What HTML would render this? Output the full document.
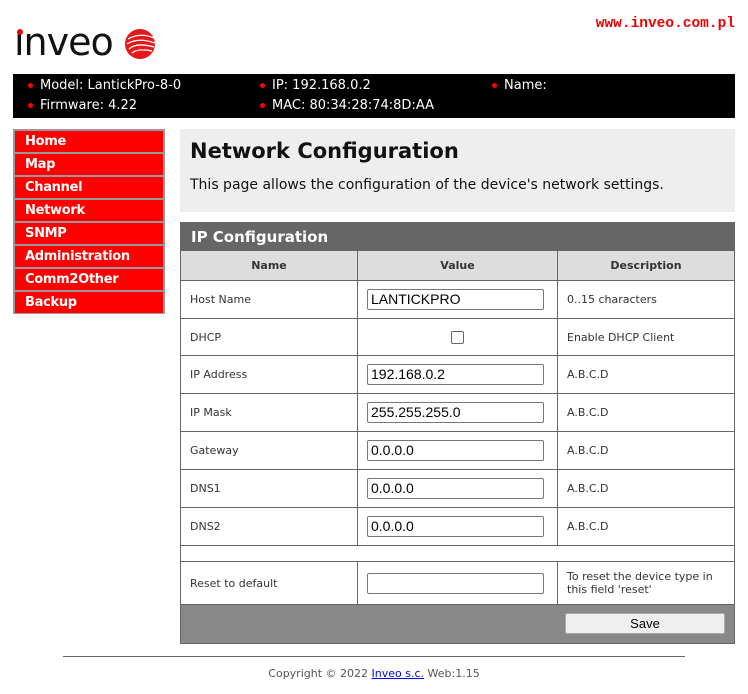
<!DOCTYPE html>
<html><head><meta charset="utf-8"><style>
*{margin:0;padding:0;box-sizing:border-box}
body{width:748px;height:694px;background:#fff;font-family:"DejaVu Sans","Liberation Sans",sans-serif;position:relative;overflow:hidden}
.a{position:absolute}
.url{right:13px;top:16px;color:#e00;font:bold 14.5px "Liberation Mono","DejaVu Sans Mono",monospace}
.logo{left:14px;top:19px;font:38px "DejaVu Sans",sans-serif;color:#111;letter-spacing:-1px;line-height:46px}
.bar{left:13px;top:74px;width:722px;height:44px;background:#000;color:#fff;font-size:13px}
.bar span{position:absolute;white-space:nowrap}
.bar i{position:absolute;width:5px;height:5px;border-radius:50%;background:#f00}
.menu{left:13px;top:129px;width:152px;height:185px;background:#999;padding:2px}
.menu div{height:21px;margin-bottom:2px;background:#f00;color:#fff;font:bold 13px "DejaVu Sans",sans-serif;padding-left:10px;line-height:21px;letter-spacing:-.3px}
.hdr{left:180px;top:129px;width:555px;height:83px;background:#eee}
.hdr h1{position:absolute;left:10px;top:10px;font-size:21px;font-weight:bold;color:#111}
.hdr p{position:absolute;left:10px;top:48px;font-size:14px;color:#111}
table{position:absolute;left:180px;top:222px;width:555px;border-collapse:collapse;font-size:11px;color:#333}
td,th{border:1px solid #666;padding:0 9px}
th{background:#ddd;height:30px;font-weight:bold;font-size:11px}
.t{background:#666;color:#fff;font-size:15px;font-weight:bold;text-align:left;height:28px;padding-left:10px}
.in{display:block;width:177px;height:21px;border:1px solid #777;border-radius:2px;font:14px "Liberation Sans",sans-serif;padding-left:3px;line-height:19px;color:#000;background:#fff}
.cb{display:block;margin:0 auto;width:13px;height:13px;border:1px solid #666;border-radius:2px}
.btn{position:absolute;right:9px;top:8px;width:160px;height:21px;background:#efefef;border:1px solid #aaa;border-radius:2px;text-align:center;font:13px "Liberation Sans",sans-serif;line-height:19px;color:#000}
</style></head><body>
<div class="a url">www.inveo.com.pl</div>
<div class="a logo">ınveo</div>
<div class="a" style="left:17px;top:29px;width:6px;height:6px;border-radius:50%;background:#e00"></div>
<svg class="a" style="left:124px;top:28px" width="32" height="32" viewBox="0 0 32 32"><circle cx="16" cy="16" r="15" fill="#e8171b"/><path d="M4 11 Q16 4 30 10 M3 16 Q14 9 31 15 M5 21 Q12 14 30 19 M8 25 Q14 20 28 23" stroke="#fff" stroke-width="1.3" fill="none"/></svg>
<div class="a bar">
<i style="left:15px;top:9px"></i><span style="left:27px;top:4px">Model: LantickPro-8-0</span>
<i style="left:247px;top:9px"></i><span style="left:259px;top:4px">IP: 192.168.0.2</span>
<i style="left:479px;top:9px"></i><span style="left:491px;top:4px">Name:</span>
<i style="left:15px;top:29px"></i><span style="left:27px;top:24px">Firmware: 4.22</span>
<i style="left:247px;top:29px"></i><span style="left:259px;top:24px">MAC: 80:34:28:74:8D:AA</span>
</div>
<div class="a menu"><div>Home</div><div>Map</div><div>Channel</div><div>Network</div><div>SNMP</div><div>Administration</div><div>Comm2Other</div><div>Backup</div></div>
<div class="a hdr"><h1>Network Configuration</h1><p>This page allows the configuration of the device's network settings.</p></div>
<table>
<tr><td colspan="3" class="t">IP Configuration</td></tr>
<tr><th style="width:177px">Name</th><th style="width:200px">Value</th><th>Description</th></tr>
<tr style="height:38px"><td>Host Name</td><td><div class="in">LANTICKPRO</div></td><td>0..15 characters</td></tr>
<tr style="height:37px"><td>DHCP</td><td><span class="cb"></span></td><td>Enable DHCP Client</td></tr>
<tr style="height:38px"><td>IP Address</td><td><div class="in">192.168.0.2</div></td><td>A.B.C.D</td></tr>
<tr style="height:38px"><td>IP Mask</td><td><div class="in">255.255.255.0</div></td><td>A.B.C.D</td></tr>
<tr style="height:38px"><td>Gateway</td><td><div class="in">0.0.0.0</div></td><td>A.B.C.D</td></tr>
<tr style="height:38px"><td>DNS1</td><td><div class="in">0.0.0.0</div></td><td>A.B.C.D</td></tr>
<tr style="height:38px"><td>DNS2</td><td><div class="in">0.0.0.0</div></td><td>A.B.C.D</td></tr>
<tr style="height:16px"><td colspan="3"></td></tr>
<tr style="height:43px"><td>Reset to default</td><td><div class="in"></div></td><td style="line-height:13px">To reset the device type in this field 'reset'</td></tr>
<tr style="height:39px"><td colspan="3" style="background:#888;position:relative"><div class="btn">Save</div></td></tr>
</table>
<div class="a" style="left:63px;top:656px;width:622px;height:1px;background:#666"></div>
<div class="a" style="left:0;width:748px;top:667px;text-align:center;font-size:11px;color:#555">Copyright © 2022 <span style="color:#00e;text-decoration:underline">Inveo s.c.</span> Web:1.15</div>
</body></html>
